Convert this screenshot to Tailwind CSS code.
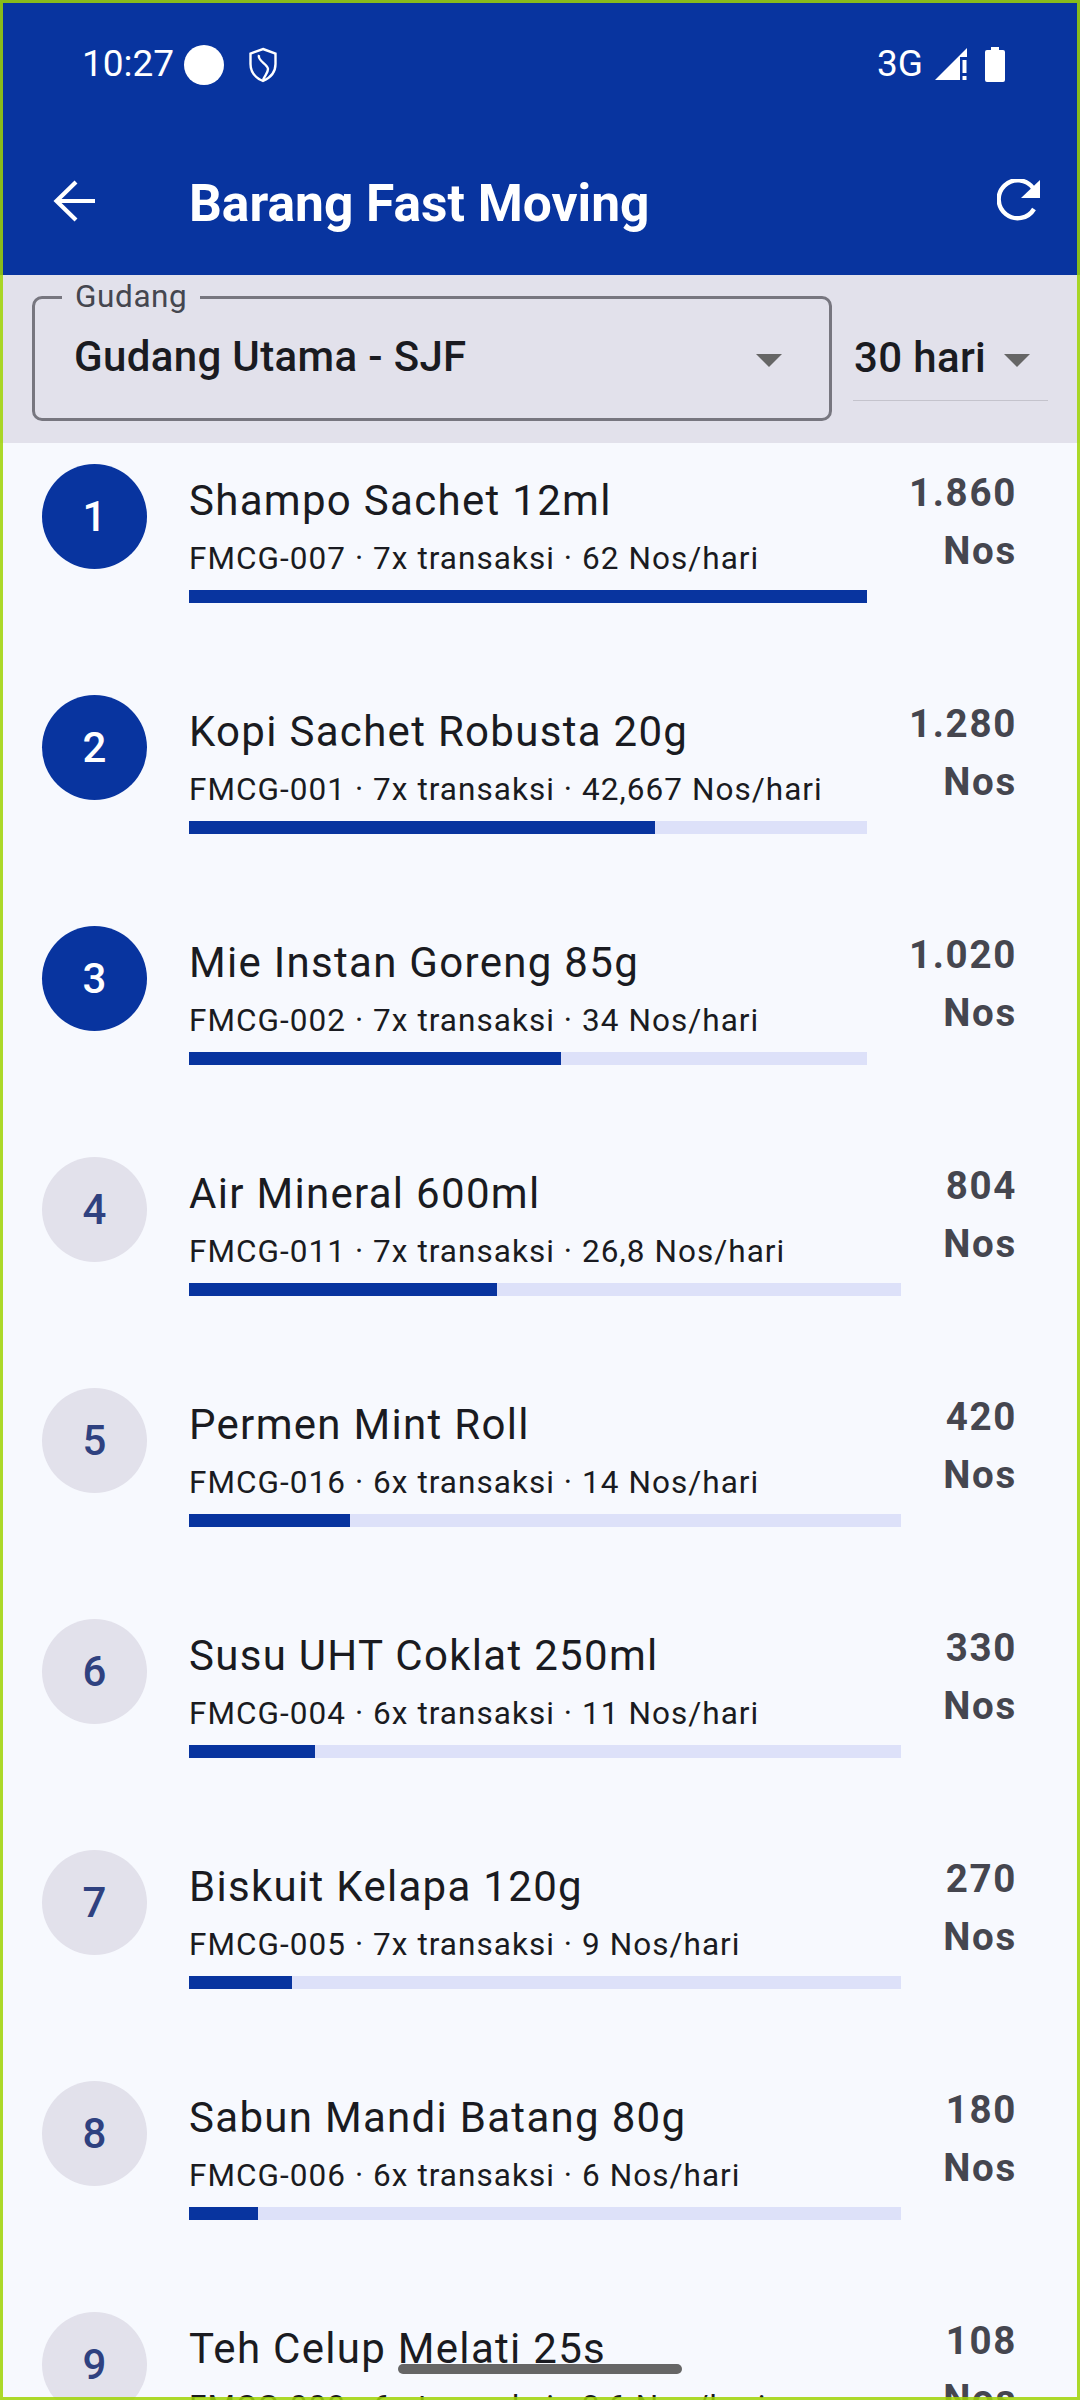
<!DOCTYPE html>
<html><head><meta charset="utf-8"><script src="https://cdn.jsdelivr.net/npm/@tailwindcss/browser@4"></script></head>
<body class="m-0">
<div class="relative w-[1080px] h-[2400px] overflow-hidden bg-[#f7f9fe] font-['Roboto',sans-serif] text-[#1a1b21]">
  <header class="h-[275px] bg-[#08349f] text-white flex flex-col">
    <div class="h-[112px] flex items-start justify-between pl-[82px] pr-[75px] pt-[45px]">
      <div class="flex items-center h-[38px]">
        <span class="text-[37px] leading-[38px] font-normal">10:27</span>
        <span class="ml-[10px] mt-[2px] w-[40px] h-[40px] rounded-full bg-white"></span>
        <svg class="ml-[24px] mt-[2px]" width="30" height="36" viewBox="0 0 30 36" fill="none" stroke="white" stroke-width="2.4"><path d="M15 2 L27.5 6.5 V17 C27.5 25 22 31 15 34 C8 31 2.500 25 2.500 17 V6.500 Z"/><path d="M11 8 C9 14 20 17 20 22 C20 26 17 28 15 33" /></svg>
      </div>
      <div class="flex items-center h-[38px]">
        <span class="text-[37px] leading-[38px]">3G</span>
        <svg class="ml-[12px]" width="32" height="32" viewBox="0 0 32 32" fill="white"><path d="M0 32 L32 0 V9 H25 V32 Z"/><rect x="27.500" y="12" width="4" height="13"/><rect x="27.500" y="28" width="4" height="4"/></svg>
        <svg class="ml-[18px]" width="20" height="35" viewBox="0 0 20 35" fill="white"><path d="M6 0 H14 V3 H18 Q20 3 20 5 V33 Q20 35 18 35 H2 Q0 35 0 33 V5 Q0 3 2 3 H6 Z"/></svg>
      </div>
    </div>
    <div class="flex-1 flex items-center pl-[53px] pr-[39px] pt-[14px]">
      <svg width="42" height="42" viewBox="0 0 42 42" fill="none" stroke="white" stroke-width="4.2" class="shrink-0"><path d="M42 21 H3 M23 2 L3.500 21 L23 40"/></svg>
      <h1 class="ml-[94px] mt-[6px] flex-1 text-[51.500px] leading-[60px] font-bold">Barang Fast Moving</h1>
      <svg width="44" height="44" viewBox="0 0 44 44" fill="none" class="shrink-0"><path d="M37 30 A19 19 0 1 1 36 9" stroke="white" stroke-width="4.400"/><path d="M43 1 V19 H24 Z" fill="white"/></svg>
    </div>
  </header>

  <section class="h-[168px] bg-[#e2e1eb] flex items-start pl-[32px] pr-[32px] pt-[21px]">
    <div class="relative w-[800px] h-[125px] border-[3px] border-[#77767f] rounded-[10px] flex items-center justify-between pl-[39px] pr-[47px] pb-[3px]">
      <span class="absolute left-[27px] -top-[18px] px-[13px] bg-[#e2e1eb] text-[31.5px] leading-[32px] tracking-[0.6px] text-[#45464f]">Gudang</span>
      <span class="text-[42px] leading-[50px] font-medium tracking-[0.35px]">Gudang Utama - SJF</span>
      <span class="w-0 h-0 border-l-[13px] border-r-[13px] border-t-[13px] border-l-transparent border-r-transparent border-t-[#666666] mt-[7px]"></span>
    </div>
    <div class="ml-[21px] flex-1 h-[105px] border-b border-[#c4c3cc] flex items-start justify-between pl-[1px] pr-[18px] pt-[37px]">
      <span class="text-[42px] leading-[50px] font-medium tracking-[0.35px]">30 hari</span>
      <span class="w-0 h-0 border-l-[13px] border-r-[13px] border-t-[13px] border-l-transparent border-r-transparent border-t-[#666666] mt-[21px]"></span>
    </div>
  </section>

  <main class="flex flex-col">
    <div class="h-[231px] flex items-start pl-[42px] pr-[63px] pt-[21px]">
      <div class="w-[105px] h-[105px] rounded-full bg-[#08349f] text-white flex items-center justify-center text-[42px] font-medium shrink-0">1</div>
      <div class="ml-[42px] flex-1 min-w-0 pt-[11px]">
        <div class="text-[42px] leading-[52px] tracking-[1.3px]">Shampo Sachet 12ml</div>
        <div class="text-[31.500px] leading-[42px] tracking-[1.05px] mt-[11px]">FMCG-007 · 7x transaksi · 62 Nos/hari</div>
        <div class="h-[13px] bg-[#dde1f9] mt-[10px]"><div class="h-full bg-[#08349f] w-full"></div></div>
      </div>
      <div class="ml-[42px] text-right text-[38.500px] leading-[58px] font-bold tracking-[1.7px] text-[#45464f]"><div>1.860</div><div>Nos</div></div>
    </div>
    <div class="h-[231px] flex items-start pl-[42px] pr-[63px] pt-[21px]">
      <div class="w-[105px] h-[105px] rounded-full bg-[#08349f] text-white flex items-center justify-center text-[42px] font-medium shrink-0">2</div>
      <div class="ml-[42px] flex-1 min-w-0 pt-[11px]">
        <div class="text-[42px] leading-[52px] tracking-[1.3px]">Kopi Sachet Robusta 20g</div>
        <div class="text-[31.500px] leading-[42px] tracking-[1.05px] mt-[11px]">FMCG-001 · 7x transaksi · 42,667 Nos/hari</div>
        <div class="h-[13px] bg-[#dde1f9] mt-[10px]"><div class="h-full bg-[#08349f] w-[68.8%]"></div></div>
      </div>
      <div class="ml-[42px] text-right text-[38.500px] leading-[58px] font-bold tracking-[1.7px] text-[#45464f]"><div>1.280</div><div>Nos</div></div>
    </div>
    <div class="h-[231px] flex items-start pl-[42px] pr-[63px] pt-[21px]">
      <div class="w-[105px] h-[105px] rounded-full bg-[#08349f] text-white flex items-center justify-center text-[42px] font-medium shrink-0">3</div>
      <div class="ml-[42px] flex-1 min-w-0 pt-[11px]">
        <div class="text-[42px] leading-[52px] tracking-[1.3px]">Mie Instan Goreng 85g</div>
        <div class="text-[31.500px] leading-[42px] tracking-[1.05px] mt-[11px]">FMCG-002 · 7x transaksi · 34 Nos/hari</div>
        <div class="h-[13px] bg-[#dde1f9] mt-[10px]"><div class="h-full bg-[#08349f] w-[54.8%]"></div></div>
      </div>
      <div class="ml-[42px] text-right text-[38.500px] leading-[58px] font-bold tracking-[1.7px] text-[#45464f]"><div>1.020</div><div>Nos</div></div>
    </div>
    <div class="h-[231px] flex items-start pl-[42px] pr-[63px] pt-[21px]">
      <div class="w-[105px] h-[105px] rounded-full bg-[#e2e1eb] text-[#2f4180] flex items-center justify-center text-[42px] font-medium shrink-0">4</div>
      <div class="ml-[42px] flex-1 min-w-0 pt-[11px]">
        <div class="text-[42px] leading-[52px] tracking-[1.3px]">Air Mineral 600ml</div>
        <div class="text-[31.500px] leading-[42px] tracking-[1.05px] mt-[11px]">FMCG-011 · 7x transaksi · 26,8 Nos/hari</div>
        <div class="h-[13px] bg-[#dde1f9] mt-[10px]"><div class="h-full bg-[#08349f] w-[43.200%]"></div></div>
      </div>
      <div class="ml-[42px] text-right text-[38.500px] leading-[58px] font-bold tracking-[1.7px] text-[#45464f]"><div>804</div><div>Nos</div></div>
    </div>
    <div class="h-[231px] flex items-start pl-[42px] pr-[63px] pt-[21px]">
      <div class="w-[105px] h-[105px] rounded-full bg-[#e2e1eb] text-[#2f4180] flex items-center justify-center text-[42px] font-medium shrink-0">5</div>
      <div class="ml-[42px] flex-1 min-w-0 pt-[11px]">
        <div class="text-[42px] leading-[52px] tracking-[1.3px]">Permen Mint Roll</div>
        <div class="text-[31.500px] leading-[42px] tracking-[1.05px] mt-[11px]">FMCG-016 · 6x transaksi · 14 Nos/hari</div>
        <div class="h-[13px] bg-[#dde1f9] mt-[10px]"><div class="h-full bg-[#08349f] w-[22.600%]"></div></div>
      </div>
      <div class="ml-[42px] text-right text-[38.500px] leading-[58px] font-bold tracking-[1.7px] text-[#45464f]"><div>420</div><div>Nos</div></div>
    </div>
    <div class="h-[231px] flex items-start pl-[42px] pr-[63px] pt-[21px]">
      <div class="w-[105px] h-[105px] rounded-full bg-[#e2e1eb] text-[#2f4180] flex items-center justify-center text-[42px] font-medium shrink-0">6</div>
      <div class="ml-[42px] flex-1 min-w-0 pt-[11px]">
        <div class="text-[42px] leading-[52px] tracking-[1.3px]">Susu UHT Coklat 250ml</div>
        <div class="text-[31.500px] leading-[42px] tracking-[1.05px] mt-[11px]">FMCG-004 · 6x transaksi · 11 Nos/hari</div>
        <div class="h-[13px] bg-[#dde1f9] mt-[10px]"><div class="h-full bg-[#08349f] w-[17.700%]"></div></div>
      </div>
      <div class="ml-[42px] text-right text-[38.500px] leading-[58px] font-bold tracking-[1.7px] text-[#45464f]"><div>330</div><div>Nos</div></div>
    </div>
    <div class="h-[231px] flex items-start pl-[42px] pr-[63px] pt-[21px]">
      <div class="w-[105px] h-[105px] rounded-full bg-[#e2e1eb] text-[#2f4180] flex items-center justify-center text-[42px] font-medium shrink-0">7</div>
      <div class="ml-[42px] flex-1 min-w-0 pt-[11px]">
        <div class="text-[42px] leading-[52px] tracking-[1.3px]">Biskuit Kelapa 120g</div>
        <div class="text-[31.500px] leading-[42px] tracking-[1.05px] mt-[11px]">FMCG-005 · 7x transaksi · 9 Nos/hari</div>
        <div class="h-[13px] bg-[#dde1f9] mt-[10px]"><div class="h-full bg-[#08349f] w-[14.500%]"></div></div>
      </div>
      <div class="ml-[42px] text-right text-[38.500px] leading-[58px] font-bold tracking-[1.7px] text-[#45464f]"><div>270</div><div>Nos</div></div>
    </div>
    <div class="h-[231px] flex items-start pl-[42px] pr-[63px] pt-[21px]">
      <div class="w-[105px] h-[105px] rounded-full bg-[#e2e1eb] text-[#2f4180] flex items-center justify-center text-[42px] font-medium shrink-0">8</div>
      <div class="ml-[42px] flex-1 min-w-0 pt-[11px]">
        <div class="text-[42px] leading-[52px] tracking-[1.3px]">Sabun Mandi Batang 80g</div>
        <div class="text-[31.500px] leading-[42px] tracking-[1.05px] mt-[11px]">FMCG-006 · 6x transaksi · 6 Nos/hari</div>
        <div class="h-[13px] bg-[#dde1f9] mt-[10px]"><div class="h-full bg-[#08349f] w-[9.700%]"></div></div>
      </div>
      <div class="ml-[42px] text-right text-[38.500px] leading-[58px] font-bold tracking-[1.7px] text-[#45464f]"><div>180</div><div>Nos</div></div>
    </div>
    <div class="h-[231px] flex items-start pl-[42px] pr-[63px] pt-[21px]">
      <div class="w-[105px] h-[105px] rounded-full bg-[#e2e1eb] text-[#2f4180] flex items-center justify-center text-[42px] font-medium shrink-0">9</div>
      <div class="ml-[42px] flex-1 min-w-0 pt-[11px]">
        <div class="text-[42px] leading-[52px] tracking-[1.3px]">Teh Celup Melati 25s</div>
        <div class="text-[31.500px] leading-[42px] tracking-[1.05px] mt-[11px]">FMCG-008 · 6x transaksi · 3,6 Nos/hari</div>
        <div class="h-[13px] bg-[#dde1f9] mt-[10px]"><div class="h-full bg-[#08349f] w-[5.800%]"></div></div>
      </div>
      <div class="ml-[42px] text-right text-[38.500px] leading-[58px] font-bold tracking-[1.7px] text-[#45464f]"><div>108</div><div>Nos</div></div>
    </div>
  </main>

  <div class="absolute left-[398px] top-[2364px] w-[284px] h-[10px] rounded-full bg-[#666666]"></div>
  <div class="absolute inset-0 border-[3px] border-[#9fd403]/85 pointer-events-none"></div>
</div>
</body></html>
